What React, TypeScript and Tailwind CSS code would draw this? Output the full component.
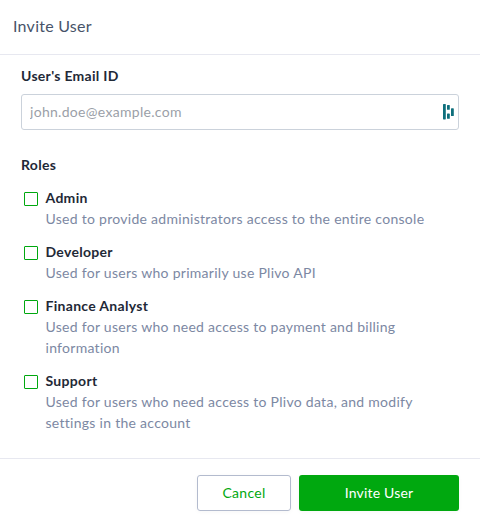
import { useState } from 'react';

interface Role {
  id: string;
  name: string;
  description: string;
}

const roles: Role[] = [
  {
    id: 'admin',
    name: 'Admin',
    description: 'Used to provide administrators access to the entire console',
  },
  {
    id: 'developer',
    name: 'Developer',
    description: 'Used for users who primarily use Plivo API',
  },
  {
    id: 'finance',
    name: 'Finance Analyst',
    description: 'Used for users who need access to payment and billing information',
  },
  {
    id: 'support',
    name: 'Support',
    description: 'Used for users who need access to Plivo data, and modify settings in the account',
  },
];

function PasswordManagerIcon() {
  return (
    <svg width="11" height="16" viewBox="0 0 11 16" fill="#0e6f7c" aria-hidden="true">
      <rect x="0" y="0" width="2.8" height="15.4" rx="0.6" />
      <rect x="4" y="1" width="2.8" height="4.8" rx="0.6" />
      <rect x="4" y="9.6" width="2.8" height="5.2" rx="0.6" />
      <rect x="8" y="4.3" width="2.8" height="7.8" rx="0.6" />
    </svg>
  );
}

export default function App() {
  const [email, setEmail] = useState('');
  const [selected, setSelected] = useState<string[]>([]);

  const toggleRole = (id: string) => {
    setSelected(prev =>
      prev.includes(id) ? prev.filter(item => item !== id) : [...prev, id]
    );
  };

  return (
    <div className="flex h-[523px] w-[480px] flex-col bg-white font-[Lato,'Noto_Sans',sans-serif] text-sm text-[#1f2937]">
      <header className="flex h-[55px] items-center border-b border-[#e7e8f0] px-[13px] pb-0.5">
        <h1 className="text-base tracking-[0.25px] text-[#475369]">Invite User</h1>
      </header>

      <main className="flex-1 px-[21px] pt-[11px]">
        <label
          htmlFor="email"
          className="block leading-5 font-bold tracking-[0.3px]"
        >
          User's Email ID
        </label>
        <div className="mt-2 flex h-9 items-center rounded-[3px] border border-[#cbd2db] pr-1 pl-2">
          <input
            id="email"
            type="email"
            value={email}
            onChange={e => setEmail(e.target.value)}
            placeholder="john.doe@example.com"
            className="min-w-0 flex-1 tracking-[0.3px] outline-none placeholder:text-[#9b9fa8]"
          />
          <PasswordManagerIcon />
        </div>

        <h2 className="mt-[25px] leading-5 font-bold tracking-[0.3px]">Roles</h2>
        <ul className="mt-3 flex flex-col gap-3 pl-[3px]">
          {roles.map(role => (
            <li key={role.id}>
              <label className="flex cursor-pointer gap-[7.5px]">
                <input
                  type="checkbox"
                  checked={selected.includes(role.id)}
                  onChange={() => toggleRole(role.id)}
                  className="mt-[5px] size-3.5 shrink-0 appearance-none rounded-[1px] border border-[#00a80f] checked:bg-[#00a80f]"
                />
                <span className="w-[390px] leading-[21px]">
                  <span className="block font-bold tracking-[0.3px]">{role.name}</span>
                  <span className="block tracking-[0.28px] text-[#7c88a3]">
                    {role.description}
                  </span>
                </span>
              </label>
            </li>
          ))}
        </ul>
      </main>

      <footer className="flex h-[65px] justify-end gap-2 border-t border-[#e7e8f0] pt-4 pr-[21px]">
        <button
          type="button"
          className="h-9 w-[94px] rounded-[3px] border border-[#b3bbce] tracking-[0.3px] text-[#00a80f] shadow-[0_1px_4px_rgba(0,0,0,0.04)]"
        >
          Cancel
        </button>
        <button
          type="button"
          className="h-9 w-40 rounded-[3px] bg-[#00a80f] tracking-[0.2px] text-white shadow-[0_1px_4px_rgba(0,0,0,0.04)]"
        >
          Invite User
        </button>
      </footer>
    </div>
  );
}
